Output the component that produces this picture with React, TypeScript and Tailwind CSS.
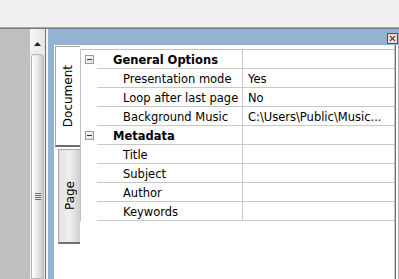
import React from "react";

const font = { fontFamily: '"DejaVu Sans", Verdana, sans-serif' };

type Row = { name: string; value?: string; cat?: boolean };

const rows: Row[] = [
  { name: "General Options", cat: true },
  { name: "Presentation mode", value: "Yes" },
  { name: "Loop after last page", value: "No" },
  { name: "Background Music", value: "C:\\Users\\Public\\Music..." },
  { name: "Metadata", cat: true },
  { name: "Title" },
  { name: "Subject" },
  { name: "Author" },
  { name: "Keywords" },
];

function MinusBox() {
  return (
    <svg width="9" height="9" viewBox="0 0 9 9" className="block">
      <defs>
        <linearGradient id="mb" x1="0" y1="0" x2="1" y2="1">
          <stop offset="0" stopColor="#ffffff" />
          <stop offset="1" stopColor="#dcdcdc" />
        </linearGradient>
      </defs>
      <rect x="0.5" y="0.5" width="8" height="8" fill="url(#mb)" stroke="#9a9a9a" />
      <line x1="2" y1="4.5" x2="7" y2="4.5" stroke="#303030" />
    </svg>
  );
}

function CloseBtn() {
  return (
    <svg width="11" height="11" viewBox="0 0 11 11" className="block">
      <rect x="0.5" y="0.5" width="10" height="10" fill="#ecd4d4" stroke="#6e4848" />
      <path d="M3 3 L8 8 M8 3 L3 8" stroke="#fff" strokeWidth="2.6" />
      <path d="M3 3 L8 8 M8 3 L3 8" stroke="#5a3a3a" strokeWidth="1.2" />
    </svg>
  );
}

export default function App() {
  return (
    <div className="w-[399px] h-[279px] overflow-hidden bg-[#f0f0f0] flex flex-col" style={font}>
      <div className="h-[28px] shrink-0 bg-[#f0f0f0] border-b border-[#a8a8a8]" />
      <div className="flex flex-1 min-h-0 border-t border-[#7a7a7a]">
        {/* left gray area */}
        <div className="w-[30px] bg-[#bfbfbf]" />
        {/* scrollbar */}
        <div className="w-[15px] bg-[#ececec] flex flex-col">
          <div className="h-[22px] bg-gradient-to-r from-[#f6f6f6] to-[#e4e4e4] flex items-center justify-center pt-[8px]">
            <svg width="7" height="4" viewBox="0 0 7 4">
              <path d="M0 4 L3.5 0 L7 4 Z" fill="#222" />
            </svg>
          </div>
          <div className="flex-1 mt-[3px] mx-[1px] rounded-t-[3px] border border-[#b4b4b4] bg-gradient-to-r from-[#ffffff] via-[#e8e8e8] to-[#c8c8c8] flex flex-col items-center">
            <div className="mt-[138px] flex flex-col gap-[1px] w-[6px]">
              <div className="h-[1px] bg-[#707070]" />
              <div className="h-[1px] bg-[#707070]" />
              <div className="h-[1px] bg-[#707070]" />
              <div className="h-[1px] bg-[#707070]" />
            </div>
          </div>
        </div>
        <div className="w-[1px] bg-[#6e6e6e]" />
        <div className="w-[2px] bg-[#f4f4f4]" />
        {/* docked panel */}
        <div className="flex-1 flex flex-col bg-[#94b3d3]">
          <div className="h-[16px] shrink-0 flex justify-end items-start pt-[4px] pr-[1px]">
            <CloseBtn />
          </div>
          <div className="flex-1 flex pl-[6px] min-h-0">
            <div className="flex-1 bg-white flex border-r border-[#c4c4c4]">
              {/* tabs */}
              <div className="w-[26px] shrink-0 flex flex-col items-end pt-[1px]">
                <div className="w-[25px] h-[101px] bg-white border-l border-t border-b-2 border-l-[#a8a8a8] border-t-[#a8a8a8] border-b-[#6e6e6e] flex items-center justify-center text-[12px] text-black">
                  <span className="[writing-mode:vertical-rl] rotate-180 leading-none">Document</span>
                </div>
                <div className="mt-[2px] w-[22px] h-[95px] bg-gradient-to-r from-[#e2e2e2] via-[#f0f0f0] to-[#cfcfcf] border-l border-t border-[#a8a8a8] border-b-2 border-b-[#707070] flex items-center justify-center text-[12px] text-black">
                  <span className="[writing-mode:vertical-rl] rotate-180 leading-none">Page</span>
                </div>
              </div>
              {/* grid */}
              <div className="flex-1 pt-[4px]">
                <div className="border-t border-l border-[#c0c0c0]">
                  {rows.map((r, i) => (
                    <div key={i} className="flex h-[19px] text-[11.5px] leading-[13px] text-black">
                      <div className="w-[16px] shrink-0 flex items-center justify-center">
                        {r.cat ? <MinusBox /> : null}
                      </div>
                      <div
                        className={`w-[146px] shrink-0 border-b border-r border-[#c8c8c8] pt-[4px] whitespace-nowrap overflow-hidden ${
                          r.cat ? "pl-[16px] font-bold" : "pl-[26px]"
                        }`}
                      >
                        {r.name}
                      </div>
                      <div className="flex-1 border-b border-[#c8c8c8] pt-[4px] pl-[5px] whitespace-nowrap overflow-hidden">
                        {r.value ?? ""}
                      </div>
                    </div>
                  ))}
                </div>
              </div>
            </div>
            <div className="w-[1px] bg-[#707070]" />
            <div className="w-[2px] bg-white" />
            <div className="w-[1px] bg-[#b0b0b0]" />
          </div>
        </div>
      </div>
    </div>
  );
}
